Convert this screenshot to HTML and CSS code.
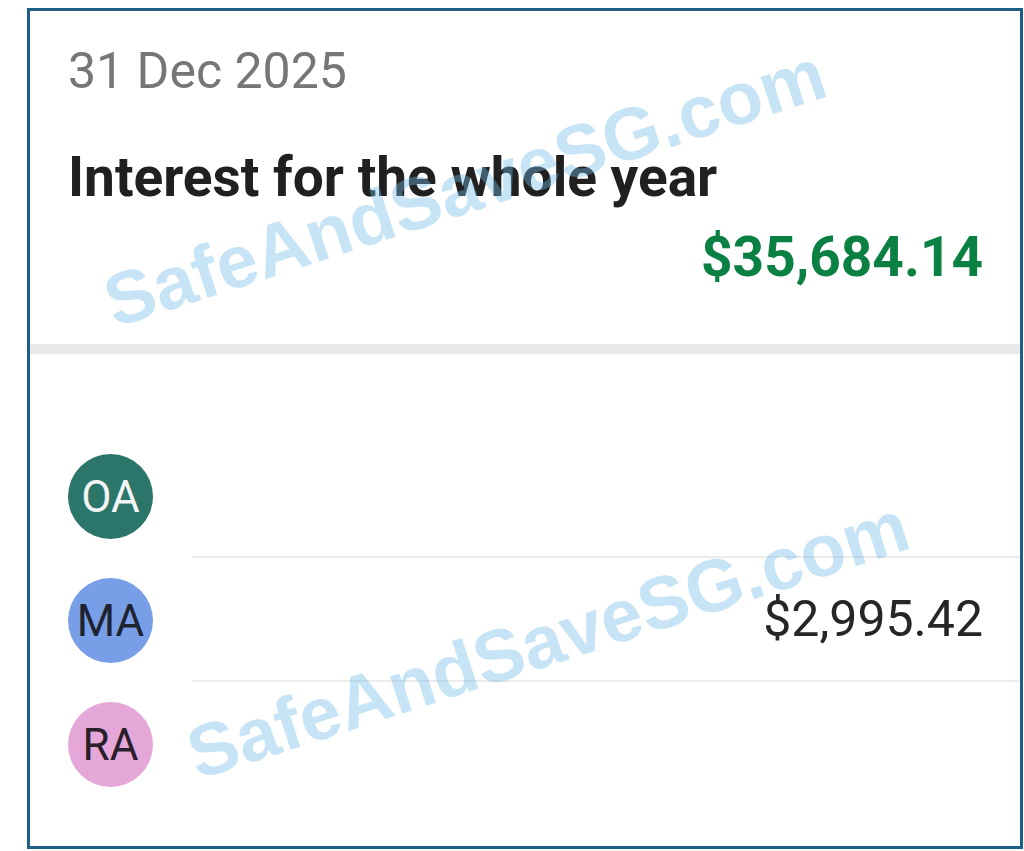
FILE: index.html
```html
<!DOCTYPE html>
<html lang="en">
<head>
<meta charset="utf-8">
<title>Interest for the whole year</title>
<link rel="stylesheet" href="styles.css">
</head>
<body>
<div class="frame">
  <section class="summary">
    <div class="date">31 Dec 2025</div>
    <div class="title">Interest for the whole year</div>
    <div class="total">$35,684.14</div>
  </section>
  <div class="divider"></div>
  <ul class="accounts">
    <li class="row">
      <div class="avatar-cell"><div class="avatar avatar-oa">OA</div></div>
      <div class="row-body"></div>
    </li>
    <li class="row">
      <div class="avatar-cell"><div class="avatar avatar-ma">MA</div></div>
      <div class="row-body"><span class="amount">$2,995.42</span></div>
    </li>
    <li class="row row-last">
      <div class="avatar-cell"><div class="avatar avatar-ra">RA</div></div>
      <div class="row-body"></div>
    </li>
  </ul>
</div>
<div class="watermark watermark-top">SafeAndSaveSG.com</div>
<div class="watermark watermark-bottom">SafeAndSaveSG.com</div>
</body>
</html>
```
FILE: styles.css
```css
html, body {
  margin: 0;
  padding: 0;
  background: #ffffff;
}

body {
  font-family: Roboto, "Noto Sans", "Liberation Sans", sans-serif;
  width: 1024px;
  height: 851px;
  overflow: hidden;
  position: relative;
}

.frame {
  box-sizing: border-box;
  margin: 8px 0 0 27px;
  width: 996px;
  height: 841px;
  border: 3px solid #1e5f85;
  background: #ffffff;
}

.summary {
  padding: 31px 37px 55px 38px;
  display: flex;
  flex-direction: column;
}

.date {
  font-size: 50px;
  line-height: 58px;
  color: #767676;
}

.title {
  margin-top: 45px;
  font-size: 55px;
  line-height: 64px;
  font-weight: 700;
  color: #202020;
}

.total {
  margin-top: 16px;
  align-self: flex-end;
  font-size: 55px;
  line-height: 64px;
  font-weight: 700;
  color: #0b8043;
}

.divider {
  height: 10px;
  background: #e9e9e9;
}

.accounts {
  list-style: none;
  margin: 0;
  padding: 80px 37px 0 38px;
}

.row {
  display: flex;
  align-items: stretch;
}

.avatar-cell {
  padding: 20px 0 19px;
}

.avatar {
  width: 85px;
  height: 85px;
  border-radius: 50%;
  display: flex;
  align-items: center;
  justify-content: center;
  font-size: 44px;
  line-height: 1;
}

.avatar-oa {
  background: #2b756a;
  color: #f4f4f4;
}

.avatar-ma {
  background: #779ee6;
  color: #1e2330;
}

.avatar-ra {
  background: #e4a7d8;
  color: #2a1e2a;
}

.row-body {
  flex: 1;
  margin-left: 39px;
  margin-right: -37px;
  padding-right: 37px;
  border-bottom: 2px solid #ececec;
  display: flex;
  align-items: center;
  justify-content: flex-end;
}

.row-last .row-body {
  border-bottom-color: transparent;
}

.amount {
  font-size: 50px;
  color: #262626;
}

.watermark {
  position: absolute;
  font-family: "Liberation Sans", Arial, sans-serif;
  font-weight: 700;
  font-size: 74px;
  line-height: 1;
  white-space: nowrap;
  color: rgba(112, 188, 232, 0.4);
  transform: translate(-50%, -50%) rotate(-18deg);
  pointer-events: none;
}

.watermark-top {
  left: 465px;
  top: 188px;
}

.watermark-bottom {
  left: 548px;
  top: 640px;
}
```
